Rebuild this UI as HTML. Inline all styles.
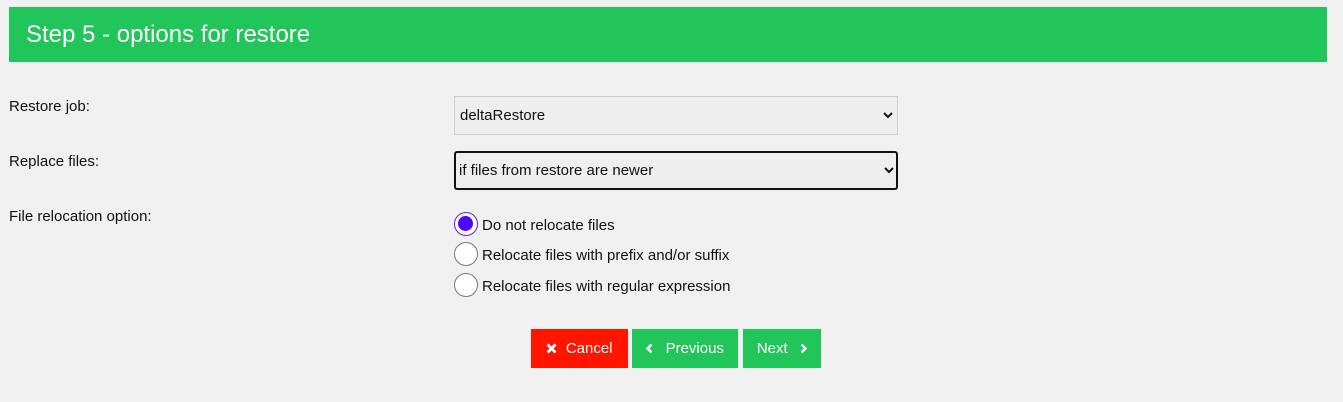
<!DOCTYPE html>
<html><head><style>
body{margin:0;background:#f0f0f0;font-family:"Liberation Sans",Arial,sans-serif;width:1343px;height:402px;position:relative;overflow:hidden;color:#111}
.a{position:absolute}
.hdr{left:9px;top:7px;width:1318px;height:55px;background:#22c55a;color:#fff;font-size:24px;line-height:56px;padding-left:17px;box-sizing:border-box}
.lbl{left:9px;font-size:15px}
.sel{left:454px;width:444px;height:39px;box-sizing:border-box;background:#eeeeee;font-size:15px;line-height:38px;padding-left:5px}
.sel svg{position:absolute;right:4px;top:14px}
.r{left:454px;width:24px;height:24px;border-radius:50%;box-sizing:border-box;border:1.5px solid #777;background:#fff}
.rt{left:482px;font-size:15px}
.btn{top:329px;height:39px;color:#fff;font-size:15px;line-height:39px;text-align:center}
.btn svg{vertical-align:-1px}
</style></head><body>
<div class="a hdr">Step 5 - options for restore</div>
<div class="a lbl" style="top:98px">Restore job:</div>
<div class="a lbl" style="top:153px">Replace files:</div>
<div class="a lbl" style="top:208px">File relocation option:</div>
<div class="a sel" style="top:96px;border:1px solid #ccc">deltaRestore<svg width="10" height="8" viewBox="0 0 10 8"><path d="M1 2l4 4 4-4" stroke="#111" stroke-width="2" fill="none"/></svg></div>
<div class="a sel" style="top:151px;border:2px solid #111;border-radius:3px;line-height:36px;padding-left:3px">if files from restore are newer<svg width="10" height="8" viewBox="0 0 10 8" style="top:13px;right:2px"><path d="M1 2l4 4 4-4" stroke="#111" stroke-width="2" fill="none"/></svg></div>
<div class="a r" style="top:212px;border:1.5px solid #5a1cff;padding:3px"><div style="width:15px;height:15px;border-radius:50%;background:#4b0aff"></div></div>
<div class="a r" style="top:242px"></div>
<div class="a r" style="top:273px"></div>
<div class="a rt" style="top:217px">Do not relocate files</div>
<div class="a rt" style="top:247px">Relocate files with prefix and/or suffix</div>
<div class="a rt" style="top:278px">Relocate files with regular expression</div>
<div class="a btn" style="left:531px;width:97px;background:#ff1500"><svg width="11" height="11" viewBox="0 0 11 11"><path d="M1.5 1.5l8 8M9.5 1.5l-8 8" stroke="#fff" stroke-width="2.8"/></svg>&nbsp; Cancel</div>
<div class="a btn" style="left:632px;width:106px;background:#22c55a"><svg width="7" height="11" viewBox="0 0 7 11"><path d="M5.5 1.5l-4 4 4 4" stroke="#fff" stroke-width="2.5" fill="none"/></svg>&nbsp;&nbsp; Previous</div>
<div class="a btn" style="left:743px;width:78px;background:#22c55a">Next &nbsp;&nbsp;<svg width="7" height="11" viewBox="0 0 7 11"><path d="M1.5 1.5l4 4-4 4" stroke="#fff" stroke-width="2.5" fill="none"/></svg></div>
</body></html>
